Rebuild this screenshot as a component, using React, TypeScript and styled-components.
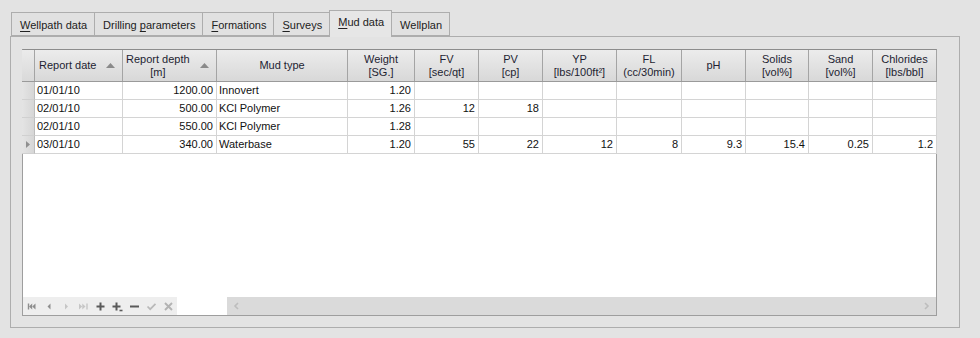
import React from 'react';
import styled, { createGlobalStyle } from 'styled-components';

const GlobalStyle = createGlobalStyle`
  html, body {
    margin: 0;
    padding: 0;
    background: #e3e3e3;
  }
  body {
    font-family: 'Liberation Sans', Arial, sans-serif;
    font-size: 11px;
    color: #1b1b1b;
  }
`;

type Align = 'left' | 'right' | 'center';

interface Column {
  title: string;
  unit?: string;
  width: number;
  align: Align;
  sort?: boolean;
}

const columns: Column[] = [
  { title: 'Report date', width: 88, align: 'left', sort: true },
  { title: 'Report depth', unit: '[m]', width: 94, align: 'right', sort: true },
  { title: 'Mud type', width: 131, align: 'left' },
  { title: 'Weight', unit: '[SG.]', width: 67, align: 'right' },
  { title: 'FV', unit: '[sec/qt]', width: 64, align: 'right' },
  { title: 'PV', unit: '[cp]', width: 64, align: 'right' },
  { title: 'YP', unit: '[lbs/100ft²]', width: 74, align: 'right' },
  { title: 'FL', unit: '(cc/30min)', width: 65, align: 'right' },
  { title: 'pH', width: 64, align: 'right' },
  { title: 'Solids', unit: '[vol%]', width: 63, align: 'right' },
  { title: 'Sand', unit: '[vol%]', width: 64, align: 'right' },
  { title: 'Chlorides', unit: '[lbs/bbl]', width: 64, align: 'right' },
];

const rows: string[][] = [
  ['01/01/10', '1200.00', 'Innovert', '1.20', '', '', '', '', '', '', '', ''],
  ['02/01/10', '500.00', 'KCl Polymer', '1.26', '12', '18', '', '', '', '', '', ''],
  ['02/01/10', '550.00', 'KCl Polymer', '1.28', '', '', '', '', '', '', '', ''],
  ['03/01/10', '340.00', 'Waterbase', '1.20', '55', '22', '12', '8', '9.3', '15.4', '0.25', '1.2'],
];

const tabs = [
  { pre: '', key: 'W', post: 'ellpath data' },
  { pre: 'Drilling ', key: 'p', post: 'arameters' },
  { pre: '', key: 'F', post: 'ormations' },
  { pre: '', key: 'S', post: 'urveys' },
  { pre: '', key: 'M', post: 'ud data', active: true },
  { pre: 'Wellplan', key: '', post: '' },
];

const template = `13px ${columns.map((c) => `${c.width}px`).join(' ')}`;

const DARK = '#5a5a5a';
const MID = '#8e8e8e';
const LIGHT = '#c6c6c6';

export default function App() {
  return (
    <>
      <GlobalStyle />
      <Page>
        <TabStrip>
          {tabs.map((t, i) => (
            <Tab key={i} $active={!!t.active}>
              {t.pre}
              {t.key && <u>{t.key}</u>}
              {t.post}
            </Tab>
          ))}
        </TabStrip>
        <Panel>
          <Grid>
            <HeaderRow>
              <IndicatorHead />
              {columns.map((c) => (
                <HeadCell key={c.title} $sort={!!c.sort} $left={c.title === 'Report date'}>
                  <HeadText>
                    {c.title}
                    {c.unit && <br />}
                    {c.unit}
                  </HeadText>
                  {c.sort && <SortArrow />}
                </HeadCell>
              ))}
            </HeaderRow>
            {rows.map((r, ri) => (
              <DataRow key={ri}>
                <Indicator>{ri === rows.length - 1 && <RowMarker />}</Indicator>
                {r.map((v, ci) => (
                  <Cell key={ci} $align={columns[ci].align}>
                    {v}
                  </Cell>
                ))}
              </DataRow>
            ))}
            <Filler />
            <Footer>
              <Navigator>
                <NavIcon>
                  <path d="M1.5 2.5v6" stroke={MID} strokeWidth="1.4" />
                  <path d="M2 5.5l3.2-3v6zM5.3 5.5l3.2-3v6z" fill={MID} />
                </NavIcon>
                <NavIcon>
                  <path d="M3.5 5.5l3-3v6z" fill={MID} />
                </NavIcon>
                <NavIcon>
                  <path d="M4 2.5l3 3-3 3z" fill={LIGHT} />
                </NavIcon>
                <NavIcon>
                  <path d="M1 2.5l3.2 3-3.2 3zM4.3 2.5l3.2 3-3.2 3z" fill={LIGHT} />
                  <path d="M9 2.5v6" stroke={LIGHT} strokeWidth="1.4" />
                </NavIcon>
                <NavIcon>
                  <path d="M5.5 1.5v8M1.5 5.5h8" stroke={DARK} strokeWidth="2" />
                </NavIcon>
                <NavIcon>
                  <path d="M4.5 1.5v8M0.5 5.5h8" stroke={DARK} strokeWidth="2" />
                  <path d="M7.5 9.5h3" stroke={DARK} strokeWidth="1.6" />
                </NavIcon>
                <NavIcon>
                  <path d="M1 5.5h9" stroke={DARK} strokeWidth="2" />
                </NavIcon>
                <NavIcon>
                  <path d="M1.5 5.5l2.7 2.7 5.3-5.3" stroke="#b9b9b9" strokeWidth="1.7" fill="none" />
                </NavIcon>
                <NavIcon>
                  <path d="M2 2l7 7M9 2l-7 7" stroke="#b3b3b3" strokeWidth="1.9" />
                </NavIcon>
              </Navigator>
              <Gap />
              <HScroll>
                <ScrollArrow viewBox="0 0 6 8">
                  <path d="M5 1L2 4l3 3" stroke="#bdbdbd" strokeWidth="1.6" fill="none" />
                </ScrollArrow>
                <ScrollArrow viewBox="0 0 6 8">
                  <path d="M1 1l3 3-3 3" stroke="#bdbdbd" strokeWidth="1.6" fill="none" />
                </ScrollArrow>
              </HScroll>
            </Footer>
          </Grid>
        </Panel>
      </Page>
    </>
  );
}

const SortArrow = () => (
  <ArrowSvg viewBox="0 0 9 5">
    <path d="M0 5L4.5 0 9 5z" fill="#8a8a8a" />
  </ArrowSvg>
);

const RowMarker = () => (
  <MarkerSvg viewBox="0 0 4 7">
    <path d="M0 0l4 3.5L0 7z" fill="#8f8f8f" />
  </MarkerSvg>
);

const Page = styled.div`
  width: 980px;
  height: 338px;
  box-sizing: border-box;
  padding: 10px 0 0 10px;
`;

const TabStrip = styled.div`
  display: flex;
  align-items: flex-end;
  height: 26px;
  padding-left: 1px;
`;

const Tab = styled.div<{ $active: boolean }>`
  height: ${(p) => (p.$active ? 27 : 24)}px;
  box-sizing: border-box;
  padding: ${(p) => (p.$active ? '5px 7px 0 8px' : '6px 7px 0 8px')};
  border: 1px solid #adadad;
  border-bottom: ${(p) => (p.$active ? 'none' : '1px solid #adadad')};
  margin-left: -1px;
  margin-bottom: ${(p) => (p.$active ? -1 : 0)}px;
  background: ${(p) => (p.$active ? '#e6e6e6' : '#e1e1e1')};
  color: #222;
  white-space: nowrap;
  position: relative;
  z-index: ${(p) => (p.$active ? 1 : 0)};
  &:first-child {
    margin-left: 0;
  }
  u {
    text-decoration: underline;
    text-underline-offset: 2px;
  }
`;

const Panel = styled.div`
  width: 950px;
  height: 292px;
  box-sizing: border-box;
  border: 1px solid #adadad;
  padding: 12px 21px 11px 11px;
`;

const Grid = styled.div`
  width: 915px;
  height: 267px;
  box-sizing: border-box;
  border: 1px solid #9e9e9e;
  border-top-color: #8c8c8c;
  background: #fff;
  display: flex;
  flex-direction: column;
`;

const HeaderRow = styled.div`
  display: grid;
  grid-template-columns: ${template};
  height: 31px;
  margin-left: -1px;
  margin-right: -1px;
  border-bottom: 1px solid #9a9a9a;
`;

const IndicatorHead = styled.div`
  background: linear-gradient(#ebebeb, #d9d9d9);
  border-right: 1px solid #a4a4a4;
`;

const HeadCell = styled.div<{ $sort: boolean; $left: boolean }>`
  display: flex;
  align-items: center;
  justify-content: ${(p) => (p.$left ? 'space-between' : 'center')};
  gap: 4px;
  padding: 0 ${(p) => (p.$sort ? 7 : 3)}px 0 ${(p) => (p.$left ? 4 : 3)}px;
  background: linear-gradient(#ececec, #d8d8d8);
  border-right: 1px solid #a4a4a4;
  text-align: center;
  line-height: 13px;
  color: #1e1e32;
  white-space: nowrap;
  overflow: hidden;
`;

const HeadText = styled.div`
  flex: 0 1 auto;
`;

const ArrowSvg = styled.svg`
  width: 9px;
  height: 5px;
  flex: 0 0 auto;
  margin-left: auto;
`;

const DataRow = styled.div`
  display: grid;
  grid-template-columns: ${template};
  height: 18px;
  margin-left: -1px;
`;

const Indicator = styled.div`
  background: linear-gradient(90deg, #e4e4e4, #d6d6d6);
  border-right: 1px solid #bdbdbd;
  border-bottom: 1px solid #d0d0d0;
  display: flex;
  align-items: center;
  padding-left: 4px;
`;

const MarkerSvg = styled.svg`
  width: 4px;
  height: 7px;
`;

const Cell = styled.div<{ $align: Align }>`
  box-sizing: border-box;
  border-right: 1px solid #d4d4d4;
  border-bottom: 1px solid #d4d4d4;
  padding: 0 3px 0 2px;
  text-align: ${(p) => p.$align};
  line-height: 17px;
  color: #111;
  white-space: nowrap;
  overflow: hidden;
`;

const Filler = styled.div`
  flex: 1;
  background: #fff;
`;

const Footer = styled.div`
  display: flex;
  height: 18px;
`;

const Navigator = styled.div`
  width: 154px;
  background: #eeeeee;
  display: flex;
  align-items: center;
  padding-left: 4px;
  gap: 6px;
  box-sizing: border-box;
`;

const NavIcon = styled.svg.attrs({ viewBox: '0 0 11 11' })`
  width: 11px;
  height: 11px;
`;

const Gap = styled.div`
  width: 50px;
  background: #fff;
`;

const HScroll = styled.div`
  flex: 1;
  background: #dadada;
  display: flex;
  align-items: center;
  justify-content: space-between;
  padding: 0 6px 0 6px;
`;

const ScrollArrow = styled.svg`
  width: 6px;
  height: 8px;
`;
